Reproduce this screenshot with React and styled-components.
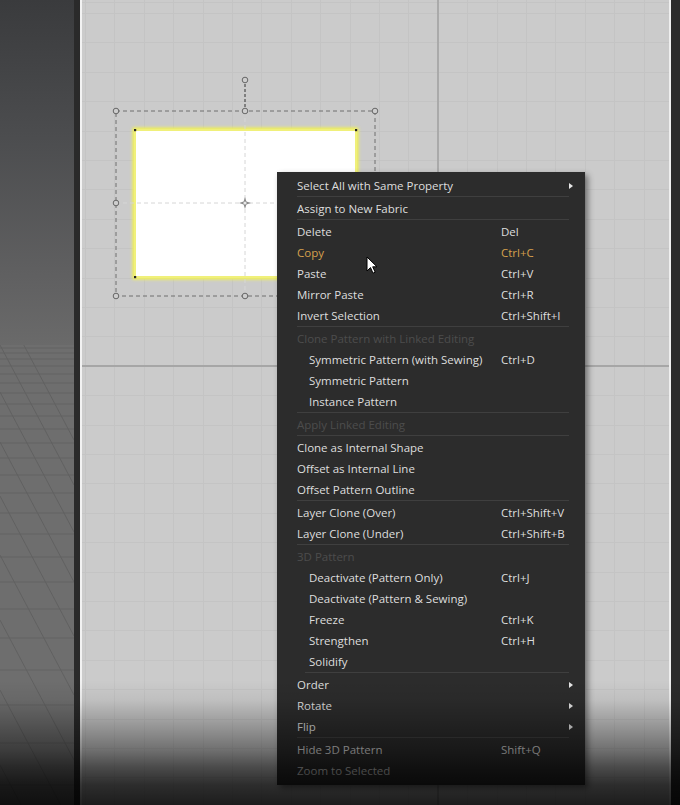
import styled, { createGlobalStyle } from "styled-components";

const GlobalStyle = createGlobalStyle`
  html, body {
    margin: 0;
    padding: 0;
    background: #1e1e1e;
  }
  body {
    overflow: hidden;
    font-family: "Open Sans", "Noto Sans", sans-serif;
  }
`;

const Screen = styled.div`
  position: relative;
  display: flex;
  width: 680px;
  height: 805px;
  overflow: hidden;
`;

const Viewport3D = styled.div`
  flex: 0 0 74px;
  display: flex;
  flex-direction: column;
`;

const Sky = styled.div`
  height: 345px;
  background: linear-gradient(#3a3b3d, #4c4d4f 40%, #606061 80%, #6a6a6a);
`;

const Floor = styled.svg`
  flex: 1;
  display: block;
  background: #6e6e6e;
`;

const Divider = styled.div`
  flex: 0 0 6px;
  background: #2a2a2a;
  border-right: 2px solid #f2f2f2;
`;

const PatternCanvas = styled.div`
  position: relative;
  flex: 1;
  background-color: #cbcbcb;
  background-image:
    linear-gradient(to right, transparent 355px, #aaaaaa 355px, #aaaaaa 357px, transparent 357px),
    linear-gradient(to bottom, transparent 365px, #a6a6a6 365px, #a6a6a6 367px, transparent 367px),
    repeating-linear-gradient(to right, #c4c4c4 0 1px, transparent 1px 29.4px),
    repeating-linear-gradient(to bottom, #c4c4c4 0 1px, transparent 1px 29.4px);
  background-position: 0 0, 0 0, 3px 0, 0 13px;
`;

const RightEdge = styled.div`
  flex: 0 0 9px;
  background: #2b2b2b;
  border-left: 2px solid #eeeeee;
`;

const Drawing = styled.svg`
  position: absolute;
  inset: 0;
  width: 100%;
  height: 100%;
`;

const Menu = styled.div`
  position: absolute;
  left: 195px;
  top: 172px;
  width: 308px;
  padding: 3px 0 4px;
  background: #2c2c2c;
  box-shadow: 3px 3px 6px rgba(0, 0, 0, 0.45);
  font-size: 11.5px;
`;

const Row = styled.div`
  display: grid;
  grid-template-columns: 1fr 68px 16px;
  align-items: center;
  height: 21px;
  padding-left: ${(p) => (p.$indent ? 32 : 20)}px;
  color: ${(p) => (p.$disabled ? "#4c4c4c" : p.$active ? "#d6a04c" : "#dedede")};
  white-space: nowrap;
`;

const Shortcut = styled.span`
  color: inherit;
`;

const Arrow = styled.span`
  width: 0;
  height: 0;
  border-left: 4px solid #e6e6e6;
  border-top: 3.5px solid transparent;
  border-bottom: 3.5px solid transparent;
`;

const Separator = styled.div`
  height: 1px;
  margin: 0 16px 1px ${(p) => (p.$indent ? 28 : 20)}px;
  background: #3f3f3f;
`;

const Cursor = styled.svg`
  position: absolute;
  left: 284px;
  top: 256px;
`;

const Vignette = styled.div`
  position: absolute;
  inset: 0;
  pointer-events: none;
  background: linear-gradient(
    to bottom,
    transparent 680px,
    rgba(0, 0, 0, 0.06) 700px,
    rgba(0, 0, 0, 0.21) 720px,
    rgba(0, 0, 0, 0.45) 750px,
    rgba(0, 0, 0, 0.63) 767px,
    rgba(0, 0, 0, 0.78) 785px,
    rgba(0, 0, 0, 0.86) 805px
  );
`;

const menu = [
  { label: "Select All with Same Property", arrow: true },
  { sep: true },
  { label: "Assign to New Fabric" },
  { sep: true },
  { label: "Delete", shortcut: "Del" },
  { label: "Copy", shortcut: "Ctrl+C", active: true },
  { label: "Paste", shortcut: "Ctrl+V" },
  { label: "Mirror Paste", shortcut: "Ctrl+R" },
  { label: "Invert Selection", shortcut: "Ctrl+Shift+I" },
  { sep: true },
  { label: "Clone Pattern with Linked Editing", disabled: true },
  { label: "Symmetric Pattern (with Sewing)", shortcut: "Ctrl+D", indent: true },
  { label: "Symmetric Pattern", indent: true },
  { label: "Instance Pattern", indent: true },
  { sep: true },
  { label: "Apply Linked Editing", disabled: true },
  { sep: true },
  { label: "Clone as Internal Shape" },
  { label: "Offset as Internal Line" },
  { label: "Offset Pattern Outline" },
  { sep: true },
  { label: "Layer Clone (Over)", shortcut: "Ctrl+Shift+V" },
  { label: "Layer Clone (Under)", shortcut: "Ctrl+Shift+B" },
  { sep: true },
  { label: "3D Pattern", disabled: true },
  { label: "Deactivate (Pattern Only)", shortcut: "Ctrl+J", indent: true },
  { label: "Deactivate (Pattern & Sewing)", indent: true },
  { label: "Freeze", shortcut: "Ctrl+K", indent: true },
  { label: "Strengthen", shortcut: "Ctrl+H", indent: true },
  { label: "Solidify", indent: true },
  { sep: true, indent: true },
  { label: "Order", arrow: true },
  { label: "Rotate", arrow: true },
  { label: "Flip", arrow: true },
  { sep: true },
  { label: "Hide 3D Pattern", shortcut: "Shift+Q" },
  { label: "Zoom to Selected" },
];

const floorRows = [348, 353, 359, 366, 374, 383, 393, 404, 416, 429, 443, 458, 475, 493, 513, 534, 557, 582, 609, 638, 670, 705, 743, 785];
const floorDiagonals = [300, 345, 392, 442, 496, 555, 620, 690, 765];

const handles = [
  [245, 80], [116, 111], [245, 111], [375, 111],
  [116, 203], [375, 203], [116, 296], [245, 296], [375, 296],
];

const corners = [[135, 130], [356, 130], [135, 277], [356, 277]];

const ContextMenu = () => (
  <Menu>
    {menu.map((item, i) =>
      item.sep ? (
        <Separator key={i} $indent={item.indent} />
      ) : (
        <Row key={i} $indent={item.indent} $disabled={item.disabled} $active={item.active}>
          <span>{item.label}</span>
          <Shortcut>{item.shortcut}</Shortcut>
          {item.arrow ? <Arrow /> : <span />}
        </Row>
      )
    )}
  </Menu>
);

const SelectedPattern = () => (
  <Drawing viewBox="82 0 587 805" preserveAspectRatio="none">
    <defs>
      <filter id="glow" x="-10%" y="-10%" width="120%" height="120%">
        <feGaussianBlur stdDeviation="1.4" />
      </filter>
    </defs>
    <rect x="116" y="111" width="259" height="185" fill="none" stroke="#6e6e6e" strokeDasharray="4 3" />
    <line x1="245" y1="84" x2="245" y2="108" stroke="#333" strokeDasharray="3 2" />
    <rect x="135" y="130" width="221" height="147" fill="none" stroke="#f4f450" strokeWidth="5" filter="url(#glow)" />
    <rect x="135" y="130" width="221" height="147" fill="#ffffff" stroke="#f0f07a" strokeWidth="2" />
    <line x1="245" y1="111" x2="245" y2="296" stroke="#d6d6d6" strokeDasharray="4 3" />
    <line x1="116" y1="203" x2="375" y2="203" stroke="#d6d6d6" strokeDasharray="4 3" />
    {corners.map(([x, y]) => (
      <rect key={`${x}-${y}`} x={x - 1} y={y - 1} width="2.2" height="2.2" fill="#222" />
    ))}
    {handles.map(([x, y]) => (
      <circle key={`${x}-${y}`} cx={x} cy={y} r="2.8" fill="#cdcdcd" stroke="#666" />
    ))}
    <path d="M245 197 L246.4 201.6 L251 203 L246.4 204.4 L245 209 L243.6 204.4 L239 203 L243.6 201.6 Z" fill="#8a8a8a" />
    <circle cx="245" cy="203" r="1.6" fill="#e8e8e8" />
  </Drawing>
);

const App = () => (
  <>
    <GlobalStyle />
    <Screen>
      <Viewport3D>
        <Sky />
        <Floor viewBox="0 345 74 460" preserveAspectRatio="none">
          {floorRows.map((y) => (
            <line key={y} x1="0" y1={y} x2="74" y2={y} stroke="#636363" />
          ))}
          {floorDiagonals.map((y) => (
            <line key={y} x1="0" y1={y} x2="74" y2={y + 140} stroke="#616161" />
          ))}
        </Floor>
      </Viewport3D>
      <Divider />
      <PatternCanvas>
        <SelectedPattern />
        <ContextMenu />
        <Cursor width="13" height="20" viewBox="0 0 13 20">
          <path d="M1 1 L1 15 L4.5 11.6 L7 17.2 L9.2 16.2 L6.7 10.8 L11 10.8 Z" fill="#fff" stroke="#000" strokeWidth="1" strokeLinejoin="round" />
        </Cursor>
      </PatternCanvas>
      <RightEdge />
      <Vignette />
    </Screen>
  </>
);

export default App;
